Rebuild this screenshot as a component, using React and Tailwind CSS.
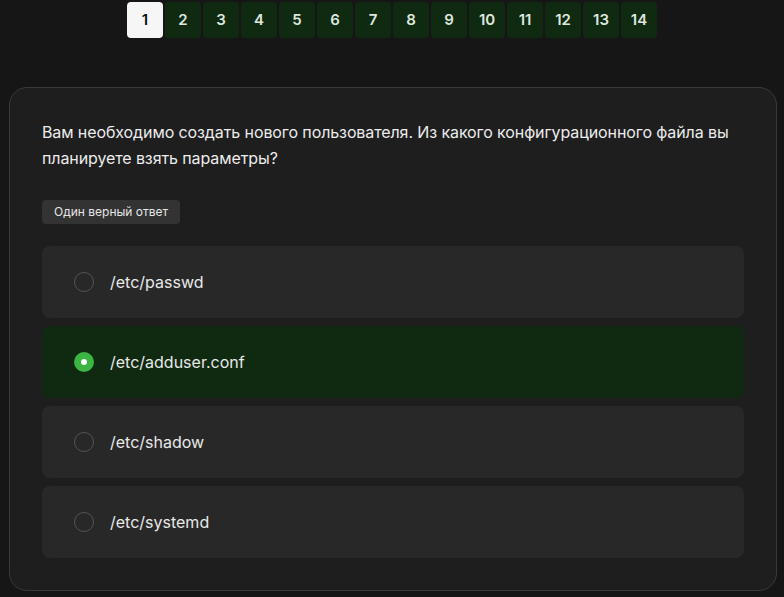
import { useState } from 'react';

const options = ['/etc/passwd', '/etc/adduser.conf', '/etc/shadow', '/etc/systemd'];

const App = () => {
  const [current, setCurrent] = useState(1);
  const [selected, setSelected] = useState(1);

  return (
    <div className="min-h-[597px] bg-[#161616] pt-[2px] pb-[7px]" style={{ fontFamily: 'Inter, "Noto Sans", sans-serif' }}>
      <div className="flex justify-center gap-[2px]">
        {Array.from({ length: 14 }, (_, i) => i + 1).map((n) => (
          <button
            key={n}
            onClick={() => setCurrent(n)}
            className={
              n === current
                ? 'w-9 h-9 rounded-[4px] bg-[#f6f6f6] text-[#111] text-[15px] font-semibold'
                : 'w-9 h-9 rounded-[4px] bg-[#0f2a10] text-[#dfe6df] text-[15px] font-semibold'
            }
          >
            {n}
          </button>
        ))}
      </div>

      <div className="ml-[9px] mr-[7px] mt-[49px] rounded-[18px] border border-[#3a3a3a] bg-[#1e1e1e] px-8 pt-[31px] pb-8">
        <p className="text-[16px] leading-[26px] tracking-[-0.1px] text-[#ececec]">
          Вам необходимо создать нового пользователя. Из какого конфигурационного файла вы планируете взять параметры?
        </p>

        <div className="mt-[29px] inline-block rounded-[4px] bg-[#333333] px-3 py-[5px] text-[12px] leading-[14px] text-[#e6e6e6]">
          Один верный ответ
        </div>

        <div className="mt-[22px] flex flex-col gap-2">
          {options.map((opt, i) => (
            <button
              key={opt}
              onClick={() => setSelected(i)}
              className={
                i === selected
                  ? 'flex h-[72px] items-center gap-4 rounded-[8px] bg-[#0f2a10] pl-8 text-left'
                  : 'flex h-[72px] items-center gap-4 rounded-[8px] bg-[#282828] pl-8 text-left'
              }
            >
              {i === selected ? (
                <span className="flex h-5 w-5 items-center justify-center rounded-full bg-[#3cb543]">
                  <span className="h-[6px] w-[6px] rounded-full bg-white" />
                </span>
              ) : (
                <span className="h-5 w-5 rounded-full border border-[#555555]" />
              )}
              <span className="text-[16px] text-[#e8e8e8]">{opt}</span>
            </button>
          ))}
        </div>
      </div>
    </div>
  );
};

export default App;
